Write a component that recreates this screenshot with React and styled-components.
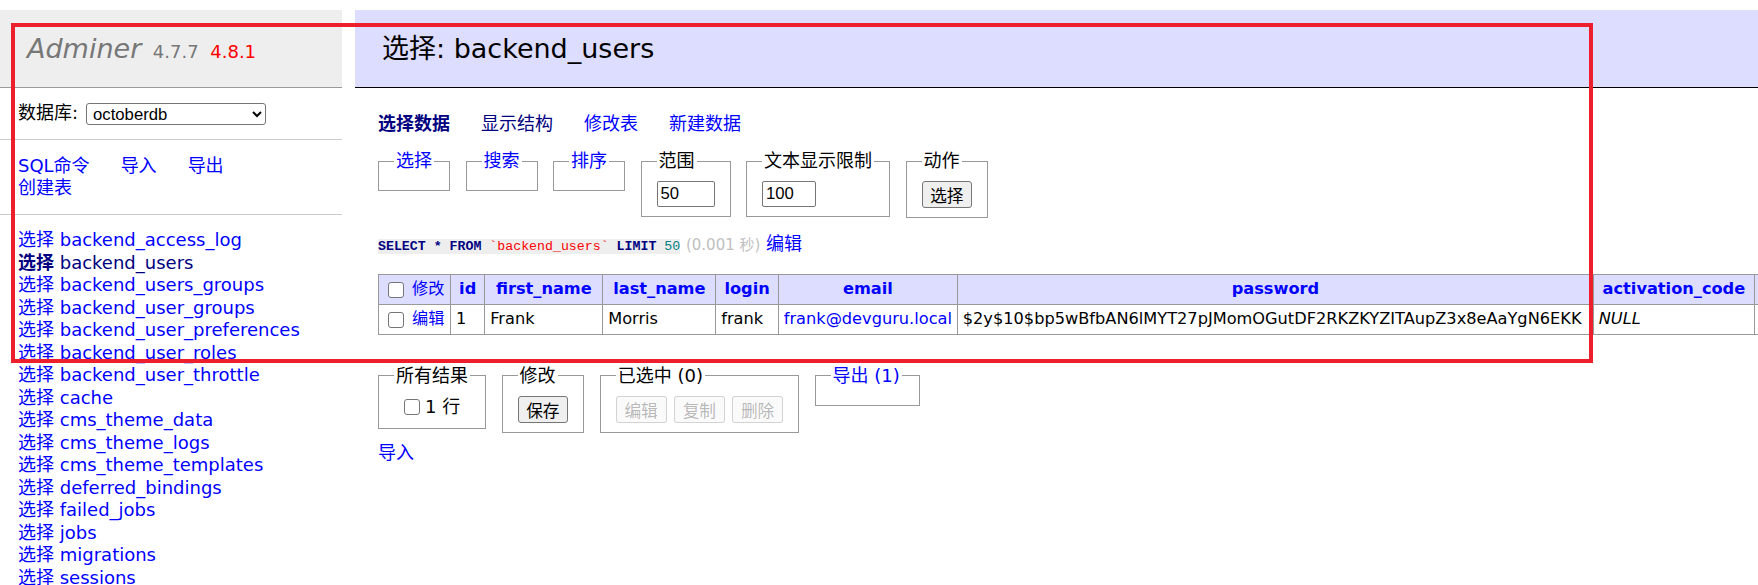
import styled, { createGlobalStyle } from 'styled-components'

const SANS = `"DejaVu Sans", Verdana, "Noto Sans CJK SC", sans-serif`;
const UI = `"Liberation Sans", Arial, "Noto Sans CJK SC", sans-serif`;
const MONO = `"Liberation Mono", "Courier New", monospace`;

const GlobalStyle = createGlobalStyle`
  html, body {
    margin: 0;
    overflow: hidden;
    background: #fff;
  }
  body {
    font: 18px/1.25 ${SANS};
    color: #000;
  }
`;

const tables = [
  'backend_access_log',
  'backend_users',
  'backend_users_groups',
  'backend_user_groups',
  'backend_user_preferences',
  'backend_user_roles',
  'backend_user_throttle',
  'cache',
  'cms_theme_data',
  'cms_theme_logs',
  'cms_theme_templates',
  'deferred_bindings',
  'failed_jobs',
  'jobs',
  'migrations',
  'sessions',
  'system_event_logs',
];

const columns = [
  { name: 'id', width: 34 },
  { name: 'first_name', width: 118 },
  { name: 'last_name', width: 113 },
  { name: 'login', width: 62 },
  { name: 'email', width: 178 },
  { name: 'password', width: 636 },
  { name: 'activation_code', width: 161 },
  { name: 'persist_code', width: 140 },
  { name: 'reset_password_code', width: 200 },
];

export default function App() {
  return (
    <Page>
      <GlobalStyle />
      <Menu>
        <Logo>
          <LogoLink>Adminer</LogoLink> <Version>4.7.7</Version> <NewVersion>4.8.1</NewVersion>
        </Logo>
        <MenuBlock>
          数据库: <DbSelect defaultValue="octoberdb"><option>octoberdb</option></DbSelect>
        </MenuBlock>
        <MenuLinks>
          <LinkItem>SQL命令</LinkItem>
          <LinkItem>导入</LinkItem>
          <LinkItem>导出</LinkItem>
          <LinkItem>创建表</LinkItem>
        </MenuLinks>
        <TableList>
          {tables.map((t) => (
            <TableRow key={t}>
              <A $active={t === 'backend_users'} $bold={t === 'backend_users'}>选择</A>{' '}
              <A $active={t === 'backend_users'}>{t}</A>
            </TableRow>
          ))}
        </TableList>
      </Menu>

      <Content>
        <Title>选择: backend_users</Title>
        <TopLinks>
          <A $active $bold>选择数据</A>
          <A $active>显示结构</A>
          <A>修改表</A>
          <A>新建数据</A>
        </TopLinks>

        <FieldRow>
          <Box><legend><A>选择</A></legend></Box>
          <Box><legend><A>搜索</A></legend></Box>
          <Box><legend><A>排序</A></legend></Box>
          <Box>
            <legend>范围</legend>
            <TextInput $w={58} defaultValue="50" />
          </Box>
          <Box>
            <legend>文本显示限制</legend>
            <TextInput $w={54} defaultValue="100" />
          </Box>
          <Box>
            <legend>动作</legend>
            <Button>选择</Button>
          </Box>
        </FieldRow>

        <Sql>
          <Code>
            <Kw>SELECT</Kw> <Kw>*</Kw> <Kw>FROM</Kw> <Bac>`backend_users`</Bac> <Kw>LIMIT</Kw> <Num>50</Num>
          </Code>{' '}
          <Time>(0.001 秒)</Time> <A>编辑</A>
        </Sql>

        <DataTable>
          <thead>
            <tr>
              <Cell as="td" $w={72}>
                <Check /> <A>修改</A>
              </Cell>
              {columns.map((c) => (
                <Head key={c.name} $w={c.width}>
                  <A>{c.name}</A>
                </Head>
              ))}
            </tr>
          </thead>
          <tbody>
            <tr>
              <Cell>
                <Check /> <A>编辑</A>
              </Cell>
              <Cell>1</Cell>
              <Cell>Frank</Cell>
              <Cell>Morris</Cell>
              <Cell>frank</Cell>
              <Cell><A>frank@devguru.local</A></Cell>
              <Cell>$2y$10$bp5wBfbAN6lMYT27pJMomOGutDF2RKZKYZITAupZ3x8eAaYgN6EKK</Cell>
              <Cell><i>NULL</i></Cell>
              <Cell><i>NULL</i></Cell>
              <Cell><i>NULL</i></Cell>
            </tr>
          </tbody>
        </DataTable>

        <FieldRow $footer>
          <Box>
            <legend>所有结果</legend>
            <CheckLabel><Check /> 1 行</CheckLabel>
          </Box>
          <Box>
            <legend>修改</legend>
            <Button>保存</Button>
          </Box>
          <Box>
            <legend>已选中 (0)</legend>
            <ButtonGroup>
              <Button disabled>编辑</Button>
              <Button disabled>复制</Button>
              <Button disabled>删除</Button>
            </ButtonGroup>
          </Box>
          <Box $min={105}>
            <legend><A>导出 (1)</A></legend>
          </Box>
        </FieldRow>

        <ImportLine><A>导入</A></ImportLine>
      </Content>

      <Annotation />
    </Page>
  );
}

const Page = styled.div`
  position: relative;
  display: flex;
  align-items: flex-start;
  width: 1758px;
  height: 585px;
  padding-top: 10px;
  box-sizing: border-box;
  overflow: hidden;
`;

const A = styled.a`
  color: ${(p) => (p.$active ? '#000080' : '#0000ff')};
  font-weight: ${(p) => (p.$bold ? 'bold' : 'normal')};
  text-decoration: none;
  cursor: pointer;
  white-space: nowrap;
`;

const Menu = styled.div`
  width: 342px;
  flex-shrink: 0;
`;

const Logo = styled.h1`
  margin: 0;
  padding: 21.6px 27px;
  font-size: 27px;
  font-weight: normal;
  line-height: 1.25;
  color: #777;
  background: #eee;
  border-bottom: 1px solid #999;
  white-space: nowrap;
`;

const LogoLink = styled.span`
  font-style: italic;
`;

const Version = styled.span`
  font-size: 18px;
  color: #777;
  margin-left: 3px;
`;

const NewVersion = styled.span`
  font-size: 18px;
  color: red;
  margin-left: 3px;
`;

const MenuBlock = styled.div`
  padding: 14.4px 18px;
  border-bottom: 1px solid #ccc;
  height: 22.5px;
  display: flex;
  align-items: center;
  white-space: nowrap;
`;

const DbSelect = styled.select`
  margin-left: 8px;
  width: 180px;
  height: 22px;
  font: 16.7px ${UI};
  color: #000;
  border: 1px solid #767676;
  border-radius: 3px;
  background: #fff;
  padding: 0 2px;
`;

const MenuLinks = styled.div`
  display: flex;
  flex-wrap: wrap;
  column-gap: 6px;
  padding: 14.4px 18px;
  border-bottom: 1px solid #ccc;
`;

const LinkItem = styled(A)`
  display: block;
  height: 22.5px;
  line-height: 22.5px;
  margin-right: 25px;
`;

const TableList = styled.ul`
  margin: 0;
  padding: 14.4px 18px;
  list-style: none;
  white-space: nowrap;
`;

const TableRow = styled.li`
  height: 22.5px;
  line-height: 22.5px;
`;

const Content = styled.div`
  flex: 1;
  min-width: 0;
  margin-left: 13px;
`;

const Title = styled.h2`
  margin: 0 0 25px;
  padding: 21.6px 27px;
  font-size: 27px;
  font-weight: normal;
  line-height: 1.25;
  color: #000;
  background: #ddf;
  border-bottom: 1px solid #000;
  white-space: nowrap;
`;

const TopLinks = styled.div`
  display: flex;
  gap: 31px;
  margin-left: 23px;
  height: 22.5px;
  line-height: 22.5px;
`;

const FieldRow = styled.div`
  display: flex;
  align-items: flex-start;
  gap: ${(p) => (p.$footer ? '15.5px' : '15.5px')};
  margin: ${(p) => (p.$footer ? '30px' : '14.4px')} 0 0 23px;
`;

const Box = styled.fieldset`
  display: flex;
  align-items: center;
  gap: 7.5px;
  margin: 0;
  padding: 9px 15px;
  border: 1px solid #999;
  min-inline-size: ${(p) => (p.$min ? `${p.$min}px` : '0')};
  box-sizing: border-box;
  line-height: 22.5px;
  white-space: nowrap;

  legend {
    padding: 0 2px;
    height: 22.5px;
    line-height: 22.5px;
  }
`;

const TextInput = styled.input`
  box-sizing: border-box;
  width: ${(p) => p.$w}px;
  height: 26px;
  padding: 1px 3px;
  font: 16.7px ${UI};
  color: #000;
  border: 1px solid #767676;
  border-radius: 2px;
  background: #fff;
`;

const Button = styled.button`
  height: 27px;
  padding: 0 7.7px;
  font: 16.7px ${UI};
  color: #000;
  background: #efefef;
  border: 1px solid #767676;
  border-radius: 3px;

  &:disabled {
    color: rgba(16, 16, 16, 0.3);
    background: rgba(239, 239, 239, 0.3);
    border-color: rgba(118, 118, 118, 0.3);
  }
`;

const ButtonGroup = styled.div`
  display: flex;
  gap: 7.5px;
`;

const CheckLabel = styled.label`
  display: flex;
  align-items: center;
  gap: 2px;
  height: 22.5px;
  margin-left: 6px;
`;

const Check = styled.input.attrs({ type: 'checkbox' })`
  appearance: none;
  box-sizing: border-box;
  width: 16px;
  height: 16px;
  margin: 0 3px 0 4px;
  vertical-align: middle;
  border: 1px solid #767676;
  border-radius: 3px;
  background: #fff;
`;

const Sql = styled.p`
  margin: 14.4px 0 0 23px;
  height: 22.5px;
  line-height: 22.5px;
  white-space: nowrap;
`;

const Code = styled.code`
  font: 13.25px ${MONO};
  background: #eee;
`;

const Kw = styled.span`
  color: #000080;
  font-weight: bold;
`;

const Bac = styled.span`
  color: red;
`;

const Num = styled.span`
  color: #008080;
`;

const Time = styled.span`
  font-size: 15px;
  color: silver;
`;

const DataTable = styled.table`
  width: max-content;
  margin: 18.5px 0 0 23px;
  border-collapse: collapse;
  font-size: 16.2px;
  line-height: 1.25;
  white-space: nowrap;
`;

const Cell = styled.td`
  box-sizing: border-box;
  ${(p) => (p.$w ? `width: ${p.$w}px;` : '')}
  height: 30px;
  padding: 0 4.9px;
  border: 1px solid #999;
  text-align: left;
  vertical-align: middle;
  thead & {
    background: #ddf;
  }
`;

const Head = styled.th`
  box-sizing: border-box;
  width: ${(p) => p.$w}px;
  height: 30px;
  padding: 0 8.1px;
  border: 1px solid #999;
  background: #ddf;
  text-align: center;
  font-weight: bold;
  vertical-align: middle;

  a {
    font-weight: bold;
  }
`;

const ImportLine = styled.p`
  margin: 9px 0 0 23px;
  height: 22.5px;
  line-height: 22.5px;
`;

const Annotation = styled.div`
  position: absolute;
  left: 11px;
  top: 23px;
  width: 1582px;
  height: 340px;
  box-sizing: border-box;
  border: 4px solid #ee1f2c;
  pointer-events: none;
`;
